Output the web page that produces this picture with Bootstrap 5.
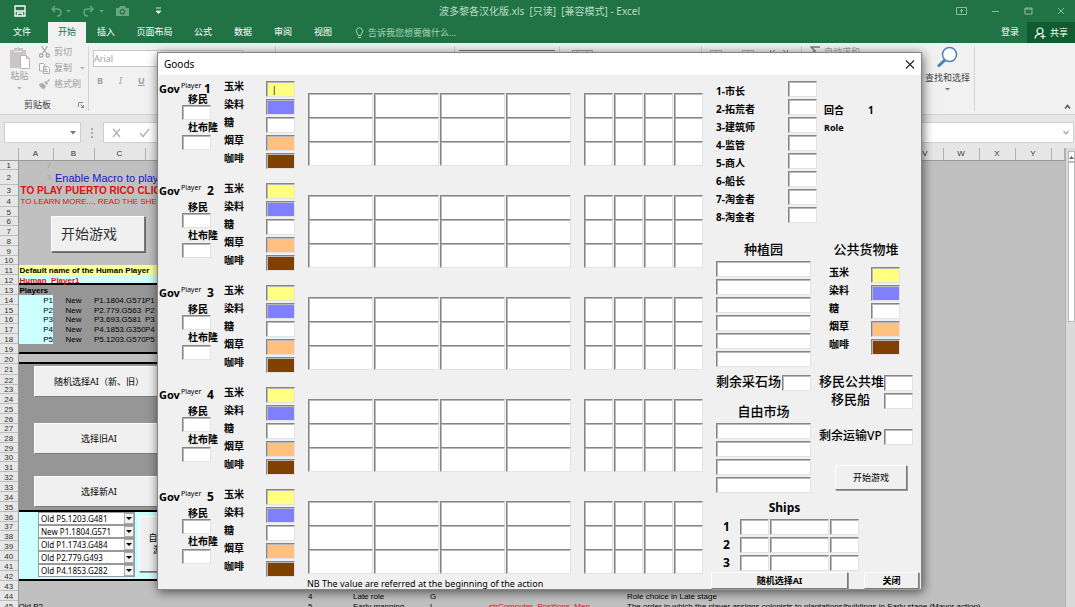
<!DOCTYPE html>
<html lang="zh-CN">
<head>
<meta charset="utf-8">
<meta name="viewport" content="width=device-width, initial-scale=1">
<title>波多黎各汉化版.xls - Excel</title>
<link href="https://cdn.jsdelivr.net/npm/bootstrap@5.3.0/dist/css/bootstrap.min.css" rel="stylesheet">
<style>
  :root { --edge: #858585; --face: #f0f0f0; }
  body { height: 100vh; overflow: hidden; font: 9px/12px "Noto Sans", "Noto Sans CJK SC", sans-serif; color: #000; background: #e6e6e6; }
  button, input, select { font: inherit; color: inherit; padding: 0; border-radius: 0; }
  svg { display: block; flex: none; }

  /* Excel frame */
  .titlebar, .tabs, .ribbon, .fbar { flex: none; }
  .titlebar { height: 22px; background: #217346; color: #b9dcc7; padding: 0 10px 0 14px; }
  .titlebar .side { flex: 1 1 0; }
  .doc-title { font-size: 10px; }
  .ico-btn { background: none; border: 0; color: inherit; }
  .tabs { height: 21px; background: #217346; color: #fff; }
  .tabs a { color: inherit; text-decoration: none; line-height: 20px; text-align: center; }
  .tab-item { width: 48px; }
  .tab-wide { width: 57px; }
  .tab-mid { width: 40px; }
  .tabs .tab-on { background: #f1f1f1; color: #217346; width: 38px; }
  .tabs .tell { color: #a9d3ba; }
  .share { background: #0e5c30; width: 48px; }
  .ribbon { height: 72px; background: #f1f1f1; border-bottom: 1px solid #d2d2d2; color: #a0a0a0; }
  .group { border-right: 1px solid #d4d4d4; margin: 3px 0; }
  .g-clip { width: 89px; } .g-font { width: 187px; } .g-align { width: 179px; } .g-num { width: 105px; }
  .g-style { width: 142px; } .g-cells { width: 100px; } .g-edit { width: 173px; }
  .fontbox { width: 150px; height: 17px; border: 1px solid #c6c6c6; background: #fff; }
  .dark-txt { color: #444; }
  .fbar { height: 33px; padding: 7px 1px 5px 4px; }
  .fbox { background: #fff; border: 1px solid #d0d0d0; }
  .namebox { width: 77px; }

  /* worksheet */
  .sheet { table-layout: fixed; width: 100%; border-collapse: collapse; font: 8px/9px "Liberation Sans", sans-serif; background: #c0c0c0; white-space: nowrap; }
  .sheet td, .sheet th { padding: 0; height: 10px; font-weight: 400; }
  .sheet thead th { height: 12px; line-height: 11px; text-align: center; background: #e6e6e6; border-right: 1px solid #b0b0b0; border-bottom: 1px solid #9a9a9a; color: #333; }
  .sheet tbody th { background: #e6e6e6; text-align: center; color: #333; border-right: 1px solid #9a9a9a; box-shadow: inset 0 -1px #bdbdbd; }
  .sheet .h9 > * { height: 9px; line-height: 8px; } .sheet .h11 > * { height: 11px; } .sheet .h15 > * { height: 15px; }
  .sheet .gray { background: #969696; } .sheet .yellow { background: #ffff99; } .sheet .cyan { background: #ccffff; }
  .sheet .rule { box-shadow: inset 0 -2px #000; }
  .sheet .faint { color: #a6a6a6; text-align: right; padding-right: 2px; }
  .sheet .big { font-size: 11px; line-height: 14px; color: #1717c8; padding-left: 2px; }
  .sheet .shout { font-size: 10px; line-height: 11px; font-weight: 700; color: #e01010; padding-left: 2px; }
  .sheet .learn { color: #e01010; padding-left: 2px; }
  .sheet .label-b { font-weight: 700; padding-left: 1px; }
  .sheet .red { color: #e01010; }
  .face-btn { background: var(--face); border: 1px solid; border-color: #fff #7a7a7a #7a7a7a #fff; box-shadow: 1px 1px #999; }
  .over { position: absolute; }
  .ai-btn { width: 130px; height: 31px; }
  .start-btn { width: 94px; height: 36px; font-size: 14px; color: #333; padding-right: 18px; box-shadow: 1px 1px #666; }
  .picker { height: 13px; border: 1px solid #999; background: #fff; font: 8px/11px "Noto Sans", sans-serif; appearance: none; padding-left: 2px; display: block; width: 100%; }
  .picker-wrap { position: relative; width: 97px; }
  .picker-wrap i { position: absolute; right: 1px; top: 1px; width: 10px; height: 11px; background: var(--face); border: 1px solid #aaa; pointer-events: none; }
  .picker-wrap i::after { content: ""; position: absolute; left: 1px; top: 3px; border: 3px solid transparent; border-top-color: #000; border-bottom: 0; }
  .vscroll { width: 12px; background: #dadada; border-left: 1px solid #b0b0b0; padding: 3px 0 0 2px; }
  .vscroll .knob { height: 11px; background: #fff; border: 1px solid #bbb; }
  .vscroll .thumb { height: 160px; background: #fff; border: 1px solid #bbb; }

  /* Goods window */
  .dlg { position: absolute; left: 157px; top: 52px; width: 765px; background: var(--face); border: 1px solid #858585; box-shadow: 1px 2px 10px rgba(0,0,0,.6); }
  .dlg-head { height: 22px; background: #fff; padding: 0 4px 0 6px; font-size: 10px; }
  .dlg-body { padding-top: 6px; }
  .box { border: 1px solid; border-color: var(--edge) #e2e2e2 #e2e2e2 var(--edge); background-color: #fff; box-shadow: inset 1px 1px #b8b8b8; display: block; height: 16px; width: 29px; outline: 0; min-width: 0; flex: none; }
  .c-corn { background-color: #ffff80; } .c-dye { background-color: #8080ff; } .c-tobacco { background-color: #ffc080; } .c-coffee { background-color: #804000; }
  .players { width: 553px; }
  .player { height: 90px; margin-bottom: 12px; }
  .player:last-of-type { margin-bottom: 0; }
  .settle { width: 66px; padding-left: 1px; }
  .gov { height: 18px; line-height: 15px; }
  .gov b { font-size: 11px; }
  .gov b:last-child { font-size: 12px; }
  .gov small { font-size: 7px; line-height: 10px; width: 27px; padding-left: 1px; }
  .player:first-child .gov { height: 12px; }
  .player:first-child .gov small { width: 24px; }
  .cjk-b { font-size: 10px; font-weight: 700; }
  .settle label { display: block; padding-left: 29px; white-space: nowrap; }
  .settle .box { margin-left: 23px; height: 15px; }
  .settle label + .box + label { line-height: 15px; }
  .line { height: 18px; }
  .goods { width: 84px; }
  .goods label { width: 42px; line-height: 10px; }
  .board { display: grid; margin-top: 12px; height: 74px; grid-auto-rows: 24px; }
  .board .box { height: 25px; width: auto; margin-right: 1px; }
  .buildings { grid-template-columns: repeat(4, 66px); margin-right: 12px; }
  .fields { grid-template-columns: repeat(4, 30px); }
  .note { padding-left: 149px; line-height: 10px; }
  .panel { padding-left: 5px; }
  .stocks { padding-top: 15px; }
  .roles label { width: 72px; line-height: 20px; }
  .roles span { line-height: 22px; margin-left: 7px; width: 37px; }
  .roles .role-word { font-size: 9px; }
  .head13 { font-size: 13px; line-height: 18px; font-weight: 500; text-align: center; white-space: nowrap; margin-bottom: 3px; }
  .w-list { width: 95px; }
  .w-list .box.full { width: 95px; }
  .quarry-row { margin: 6px 0 9px; }
  .w-pool { width: 94px; }
  .w-pool > .head13 { margin-bottom: 9px; }
  .goods.stock { padding-left: 10px; }
  .gap-18 { margin-top: 18px; }
  .pool-row label { line-height: 13px; text-align: left; margin: 0; }
  .pool-row .vp { font-size: 12px; }
  .ships { padding-top: 4px; }
  .ships .head13 { width: 137px; font-size: 12px; font-weight: 700; margin-bottom: 2px; }
  .ships .num { width: 24px; font-size: 12px; line-height: 16px; font-weight: 700; padding-left: 7px; }
  .dlg-btn { width: 72px; height: 25px; }
  .foot { height: 17px; margin-top: -1px; }
  .foot .cjk-b { font-size: 9px; }
</style>
</head>
<body class="d-flex flex-column position-relative">

<header class="titlebar d-flex align-items-center">
  <div class="side d-flex align-items-center">
    <svg width="12" height="12" viewBox="0 0 12 12" fill="none" stroke="#fff" stroke-width="1.3"><path d="M1 1h10v10H1zM1 6h10M3.5 11V8h5v3"/></svg>
    <svg class="ms-4" width="32" height="12" viewBox="0 0 32 12" fill="none" stroke="#6aa583" stroke-width="1.4"><path d="M5 1L2 4l3 3M2 4h5q4 0 4 3.500T7 11"/><path d="M16 5h5l-2.500 2.500z" fill="#6aa583" stroke="none"/></svg>
    <svg width="34" height="12" viewBox="0 0 34 12" fill="none" stroke="#6aa583" stroke-width="1.400"><path d="M8 1l3 3-3 3M11 4H6Q2 4 2 7.500T6 11"/><path d="M17 5h5l-2.500 2.500z" fill="#6aa583" stroke="none"/></svg>
    <svg width="13" height="10" viewBox="0 0 13 10"><path fill="#6aa583" fill-rule="evenodd" d="M0 2h3l1-2h5l1 2h3v8H0zM6.500 3a2.800 2.800 0 1 0 .01 0zM6.500 4.300a1.500 1.500 0 1 1-.01 0z"/></svg>
    <svg class="ms-4" width="10" height="8" viewBox="0 0 10 8"><path d="M3 1h5M3 4h5l-2.500 2.500z" stroke="#fff" stroke-width=".8" fill="#fff"/></svg>
  </div>
  <div class="doc-title">波多黎各汉化版.xls&nbsp; [只读]&nbsp; [兼容模式] - Excel</div>
  <div class="side d-flex align-items-center justify-content-end gap-4">
    <svg width="11" height="8" viewBox="0 0 11 8" fill="none" stroke="#8dbd9f"><path d="M.5.5h10v7H.5zM5.500 6V2.500M4 4l1.500-1.500L7 4"/></svg>
    <svg width="9" height="8" viewBox="0 0 9 8" stroke="#8dbd9f"><path d="M1 4.500h7"/></svg>
    <svg width="9" height="8" viewBox="0 0 9 8" fill="none" stroke="#8dbd9f"><path d="M1 1h7v6H1zM1 2h7"/></svg>
    <svg width="8" height="8" viewBox="0 0 8 8" stroke="#8dbd9f"><path d="M1 1l6 6M7 1L1 7"/></svg>
  </div>
</header>

<nav class="tabs d-flex">
  <a href="#" class="tab-item pe-1">文件</a><a href="#" class="tab-on">开始</a><a href="#" class="tab-mid">插入</a><a href="#" class="tab-wide">页面布局</a><a href="#" class="tab-mid">公式</a><a href="#" class="tab-mid">数据</a><a href="#" class="tab-mid">审阅</a><a href="#" class="tab-mid">视图</a>
  <a href="#" class="tell d-flex align-items-center gap-1 ms-2 ps-1"><svg width="9" height="12" viewBox="0 0 9 12" fill="none" stroke="#a9d3ba"><path d="M3 8.500Q3 7 2 6a3.200 3.200 0 1 1 5 0Q6 7 6 8.500zM3 10.500h3"/></svg>告诉我您想要做什么...</a>
  <a href="#" class="ms-auto me-2">登录</a>
  <a href="#" class="share d-flex align-items-center justify-content-center gap-1"><svg width="12" height="12" viewBox="0 0 12 12" fill="none" stroke="#fff" stroke-width="1.200"><circle cx="6" cy="4" r="3"/><path d="M1 11.500Q1.500 7.500 6 7.200M6.500 9.500h5M9 7v5"/></svg>共享</a>
</nav>

<section class="ribbon d-flex">
  <div class="group g-clip d-flex flex-column">
    <div class="d-flex ps-2">
      <div class="text-center">
        <svg width="23" height="24" viewBox="0 0 23 24"><path fill="#c9c5c9" d="M2 4h4V2h3q1-2 2 0h4v2h3v18H2z"/><path fill="#f1f1f1" d="M6 5h8v1H6z"/><path d="M12.500 9.500h6l3 3v10h-9zM18.500 9.500v3h3" fill="#fff" stroke="#b5b5b5"/></svg>
        <div>粘贴</div>
        <svg class="mx-auto" width="5" height="10" viewBox="0 0 5 10"><path d="M0 5h5L2.500 7.500z" fill="#b5b5b5"/></svg>
      </div>
      <div class="ms-2">
        <div class="d-flex align-items-center gap-1 mb-1"><svg width="11" height="12" viewBox="0 0 11 12" fill="none" stroke="#a5a5a5" stroke-width="1.200"><path d="M2.500 0L8 8M8.500 0L3 8"/><circle cx="2.200" cy="9.500" r="1.700"/><circle cx="8.800" cy="9.500" r="1.700"/></svg>剪切</div>
        <div class="d-flex align-items-center gap-1 mb-1"><svg width="11" height="11" viewBox="0 0 11 11" fill="#f8f8f8" stroke="#adadad"><path d="M.5.5h4l1.500 1.500v6H.5zM4.500 3.500h4l2 2v5h-6zM6 6.500h2M6 8.500h3"/></svg>复制<svg class="ms-1" width="5" height="3" viewBox="0 0 5 3"><path d="M0 0h5L2.500 2.500z" fill="#b5b5b5"/></svg></div>
        <div class="d-flex align-items-center gap-1"><svg width="11" height="11" viewBox="0 0 11 11"><path d="M0 5l4-1 3 3-2 4-1-2-1 1-1-2-1 0zM5 3l2-1 2 2-1 2zM8 2l2-2 1 1-2 2z" fill="#ababab"/></svg>格式刷</div>
      </div>
    </div>
    <div class="mt-auto d-flex justify-content-between align-items-center ps-4 pe-1 dark-txt">剪贴板<svg width="6" height="6" viewBox="0 0 6 6" fill="none" stroke="#888"><path d="M.5 5V.5H5M2.500 2.500l3 3M5.500 3v2.500H3"/></svg></div>
  </div>
  <div class="group g-font pt-1 ps-1">
    <div class="fontbox d-flex align-items-center">Arial</div>
    <div class="d-flex gap-3 align-items-center mt-2 ps-1"><b>B</b><i>I</i><b class="text-decoration-underline">U</b><svg width="5" height="3" viewBox="0 0 5 3"><path d="M0 0h5L2.500 2.500z" fill="#b5b5b5"/></svg></div>
  </div>
  <div class="group g-align"></div>
  <div class="group g-num"><div class="mt-1 border-top border-secondary mx-1"></div></div>
  <div class="group g-style ps-2 pt-1"><svg class="ms-1" width="22" height="8" viewBox="0 0 22 8" fill="none" stroke="#999"><path d="M.5 8V.5h20V8M5 .5V8M15 .5V8M7 3h5"/></svg></div>
  <div class="group g-cells ps-2 pt-1 d-flex gap-3"><svg width="12" height="8" viewBox="0 0 12 8" fill="none" stroke="#aaa"><path d="M.5 8V.5h11V8M6 .5V8"/></svg><svg class="ms-1" width="12" height="8" viewBox="0 0 12 8" fill="none" stroke="#aaa"><path d="M.5 8V.5h11V8M6 .5V8"/></svg><svg width="18" height="7" viewBox="0 0 18 7" fill="none" stroke="#4a82b8"><path d="M.5 0v5M17.500 0v5M2 2.500h14M5 0L2 2.500 5 5M13 0l3 2.500L13 5"/></svg></div>
  <div class="group g-edit d-flex justify-content-between ps-2 pe-1">
    <div class="d-flex align-items-start gap-1"><svg width="10" height="9" viewBox="0 0 10 9" fill="none" stroke="#777" stroke-width="1.500"><path d="M10 1H1l4 4-4 3h9"/></svg><span>自动求和</span></div>
    <div class="dark-txt text-center">
      <svg class="mx-auto" width="22" height="22" viewBox="0 0 22 22" fill="#fff" stroke="#4c80b5"><path d="M10 13L2 20.500" stroke-width="3"/><circle cx="13.500" cy="8.500" r="7" stroke-width="1.500"/></svg>
      <div class="mt-1">查找和选择</div>
      <svg class="mx-auto mt-1" width="5" height="3" viewBox="0 0 5 3"><path d="M0 0h5L2.500 2.500z" fill="#777"/></svg>
    </div>
  </div>
  <svg class="ms-auto mt-auto mb-1 me-1" width="7" height="6" viewBox="0 0 7 6" fill="none" stroke="#555" stroke-width="1.500"><path d="M1 4.500l2.500-3 2.500 3"/></svg>
</section>

<section class="fbar d-flex">
  <div class="fbox namebox d-flex align-items-center justify-content-end pe-1"><svg width="6" height="4" viewBox="0 0 6 4"><path d="M0 0h6L3 3.500z" fill="#777"/></svg></div>
  <svg class="mx-2" width="6" height="21" viewBox="0 0 6 21" fill="#aaa"><path d="M2 6h2v2H2zM2 10h2v2H2zM2 14h2v2H2z"/></svg>
  <div class="fbox flex-fill d-flex align-items-center ps-1">
    <svg class="ms-1" width="38" height="10" viewBox="0 0 38 10" fill="none" stroke="#b5b5b5" stroke-width="1.500"><path d="M1 1l7 8M8 1L1 9M28 5l3 3.500L37 1"/></svg>
    <svg class="ms-auto me-1" width="6" height="5" viewBox="0 0 6 5" fill="none" stroke="#aaa" stroke-width="1.300"><path d="M.5 1L3 4l2.500-3"/></svg>
  </div>
</section>

<main class="d-flex flex-fill overflow-hidden">
  <div class="flex-fill overflow-hidden position-relative">
    <table class="sheet">
      <colgroup><col style="width:18px"><col style="width:35px"><col style="width:41px"><col style="width:51px"><col style="width:36px"><col style="width:127px"><col style="width:45px"><col style="width:77px"><col style="width:59px"><col style="width:138px"><col style="width:280px"><col style="width:36px"><col style="width:36px"><col style="width:36px"><col style="width:36px"><col></colgroup>
      <thead><tr><th></th><th>A</th><th>B</th><th>C</th><th>D</th><th></th><th></th><th></th><th></th><th></th><th></th><th>V</th><th>W</th><th>X</th><th>Y</th><th></th></tr></thead>
      <tbody id="rows"></tbody>
    </table>
    <button class="face-btn start-btn over" style="left:51px;top:68px">开始游戏</button>
    <button class="face-btn ai-btn over" style="left:34px;top:218px">随机选择AI（新、旧）</button>
    <button class="face-btn ai-btn over" style="left:34px;top:275px">选择旧AI</button>
    <button class="face-btn ai-btn over" style="left:34px;top:328px">选择新AI</button>
    <div class="over" id="pickers" style="left:38px;top:364px"></div>
    <button class="face-btn over" style="left:139px;top:368px;width:46px;height:56px">自定义<br>游戏</button>
  </div>
  <div class="vscroll"><div class="knob"><svg class="mx-auto mt-1" width="5" height="3" viewBox="0 0 5 3"><path d="M0 3h5L2.500 0z" fill="#666"/></svg></div><div class="thumb"></div></div>
</main>

<section class="dlg" role="dialog" aria-label="Goods">
  <div class="dlg-head d-flex justify-content-between align-items-center">Goods
    <button class="ico-btn" aria-label="关闭窗口"><svg width="15" height="11" viewBox="0 0 15 11" fill="none" stroke="#222" stroke-width="1.100"><path d="M4 1.500l8 8M12 1.500l-8 8"/></svg></button>
  </div>
  <div class="dlg-body d-flex">
    <div class="players">
      <div id="players"></div>
      <div class="note">NB The value are referred at the beginning of the action</div>
    </div>
    <div class="flex-fill">
      <div class="panel roles" id="roles"></div>
      <div class="panel stocks d-flex gap-2">
        <div class="w-list">
          <div class="head13">种植园</div>
          <div data-list="6" data-name="种植园"></div>
          <div class="d-flex line pool-row quarry-row justify-content-between"><label class="head13" for="quarry">剩余采石场</label><input class="box" id="quarry"></div>
          <div class="head13">自由市场</div>
          <div data-list="4" data-name="自由市场"></div>
        </div>
        <div class="w-pool">
          <div class="head13">公共货物堆</div>
          <div class="goods stock" id="stock"></div>
          <div class="gap-18 line d-flex justify-content-between pool-row"><label class="head13" for="pool">移民公共堆</label><input class="box" id="pool"></div>
          <div class="line d-flex justify-content-between pool-row"><label class="head13 ps-2 ms-1" for="ship">移民船</label><input class="box" id="ship"></div>
          <div class="gap-18 line d-flex justify-content-between pool-row"><label class="head13 vp" for="vp">剩余运输VP</label><input class="box" id="vp"></div>
          <div class="gap-18 ps-3"><button class="face-btn dlg-btn">开始游戏</button></div>
        </div>
      </div>
      <div class="panel ships">
        <div class="head13">Ships</div>
        <div id="ships"></div>
      </div>
      <div class="foot d-flex"><button class="face-btn cjk-b" style="width:137px">随机选择AI</button><button class="face-btn cjk-b ms-3" style="width:55px">关闭</button></div>
    </div>
  </div>
</section>

<script src="https://cdn.jsdelivr.net/npm/bootstrap@5.3.0/dist/js/bootstrap.bundle.min.js"></script>
<script>
  const $ = id => document.getElementById(id);
  const goods = [['玉米', 'c-corn'], ['染料', 'c-dye'], ['糖', ''], ['烟草', 'c-tobacco'], ['咖啡', 'c-coffee']];
  const goodsRows = key => goods.map(([name, cls], i) =>
    `<div class="line d-flex"><label class="cjk-b" for="${key}${i}">${name}</label><input class="box ${cls}" id="${key}${i}"></div>`).join('');
  const cells = (n, name) => Array.from({ length: n }, (_, i) => `<input class="box" aria-label="${name} ${i + 1}">`).join('');

  $('players').innerHTML = [1, 2, 3, 4, 5].map(n => `
    <div class="player d-flex">
      <div class="settle">
        <div class="gov d-flex"><b>Gov</b><small>Player</small><b>${n}</b></div>
        <label class="cjk-b" for="col${n}">移民</label><input class="box" id="col${n}">
        <label class="cjk-b" for="dub${n}">杜布隆</label><input class="box" id="dub${n}">
      </div>
      <div class="goods">${goodsRows('g' + n)}</div>
      <div class="board buildings">${cells(12, '建筑')}</div>
      <div class="board fields">${cells(12, '种植')}</div>
    </div>`).join('');
  $('g10').value = '  |';

  $('stock').innerHTML = goodsRows('stock');
  $('roles').innerHTML = ['1-市长', '2-拓荒者', '3-建筑师', '4-监管', '5-商人', '6-船长', '7-淘金者', '8-淘金者'].map((r, i) =>
    `<div class="line d-flex cjk-b"><label for="role${i}">${r}</label><input class="box" id="role${i}">` +
    (i === 1 ? '<span>回合</span><span>1</span>' : i === 2 ? '<span class="role-word">Role</span>' : '') + '</div>').join('');
  document.querySelectorAll('[data-list]').forEach(el => {
    el.innerHTML = Array.from({ length: +el.dataset.list }, (_, i) =>
      `<div class="line"><input class="box full" aria-label="${el.dataset.name} ${i + 1}"></div>`).join('');
  });
  $('ships').innerHTML = [1, 2, 3].map(n =>
    `<div class="line d-flex"><span class="num">${n}</span>${[29, 59, 29].map(w =>
      `<input class="box" aria-label="Ship ${n}" style="width:${w}px;margin-right:1px">`).join('')}</div>`).join('');

  $('pickers').innerHTML = ['Old P5.1203.G481', 'New P1.1804.G571', 'Old P1.1743.G484', 'Old P2.779.G493', 'Old P4.1853.G282'].map((t, i) =>
    `<div class="picker-wrap"><select class="picker" aria-label="AI ${i + 1}"><option>${t}</option></select><i></i></div>`).join('');

  const heights = { 2: 'h15', 3: 'h11', 4: 'h11', 21: 'h11' };
  [6, 10, 16, 23, 27, 30, 37].forEach(n => heights[n] = 'h9');
  const bots = ['P1.1804.G571', 'P2.779.G563', 'P3.693.G581', 'P4.1853.G350', 'P5.1203.G570'];
  const content = {
    1: '<td class="faint">7</td>',
    2: '<td class="faint">3</td><td class="big">Enable Macro to play</td>',
    3: '<td class="shout">TO PLAY PUERTO RICO CLICK</td>',
    4: '<td class="learn">TO LEARN MORE..., READ THE SHEET</td>',
    11: '<td class="yellow label-b" colspan="4">Default name of the Human Player</td>',
    12: '<td class="cyan label-b red rule" colspan="4">Human_Player1</td>',
    13: '<td class="gray label-b" colspan="4">Players</td>',
    19: '<td class="gray rule" colspan="4"></td>',
    20: '<td class="rule" colspan="4"></td>',
    35: '<td class="gray rule" colspan="4"></td>',
    42: '<td class="cyan rule" colspan="4"></td>',
    44: '<td colspan="5"></td><td>4</td><td>Late role</td><td>G</td><td></td><td>Role choice in Late stage</td>',
    45: '<td colspan="5">Old P2</td><td>5</td><td>Early manning</td><td>L</td><td class="red">strComputer_Positions_Men</td><td>The order in which the player assigns colonists to plantations/buildings in Early stage (Mayor action)</td>'
  };
  bots.forEach((b, i) => content[14 + i] =
    `<td class="cyan text-end">P${i + 1}</td><td class="gray text-center">New</td><td class="gray overflow-hidden">${b}</td><td class="gray">P${i + 1}</td>`);
  for (let n = 21; n < 42; n++) if (!content[n]) content[n] = `<td class="${n < 36 ? 'gray' : 'cyan'}" colspan="4"></td>`;
  let html = '';
  for (let n = 1; n <= 45; n++) html += `<tr class="${heights[n] || ''}"><th scope="row">${n}</th>${content[n] || ''}</tr>`;
  $('rows').innerHTML = html;
</script>
</body>
</html>
